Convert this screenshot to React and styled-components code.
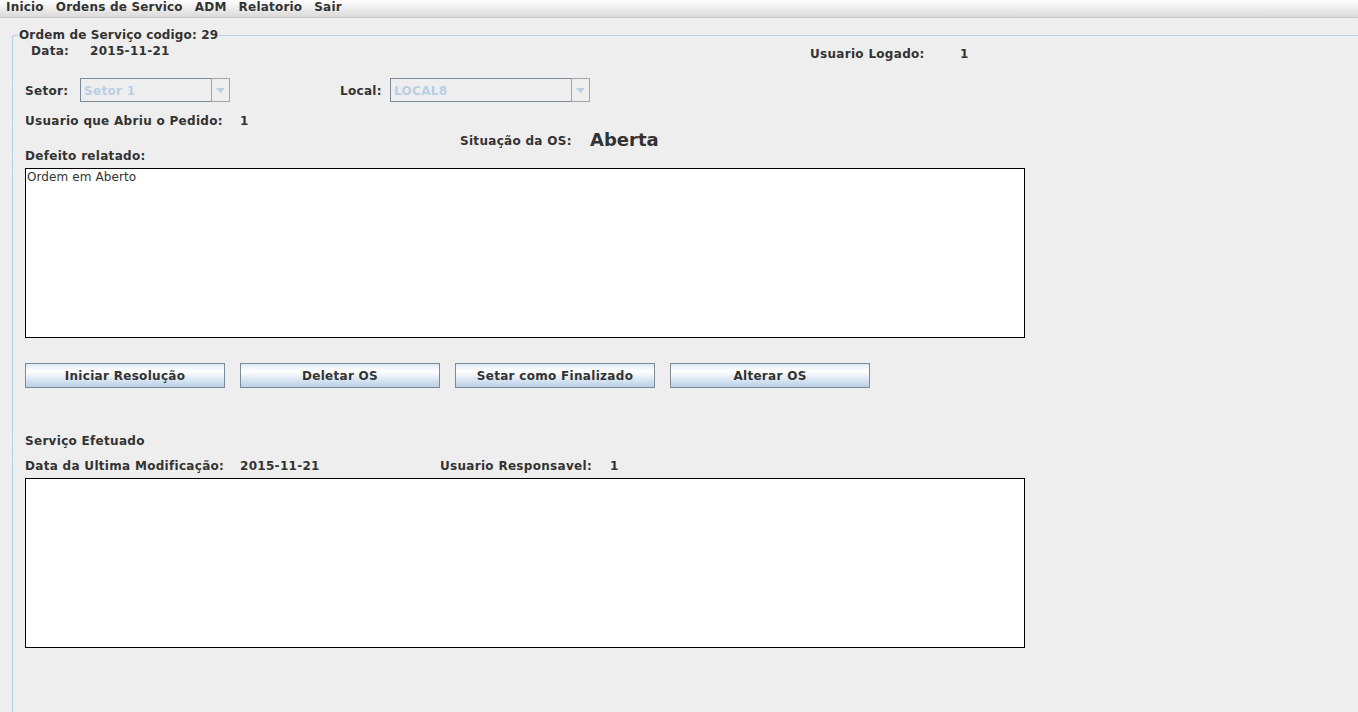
import React from 'react'
import styled, { createGlobalStyle } from 'styled-components'

const GlobalStyle = createGlobalStyle`
  html, body {
    margin: 0;
    padding: 0;
    background: #eeeeee;
    overflow: hidden;
  }
  body {
    font-family: "DejaVu Sans", "Liberation Sans", sans-serif;
    font-size: 12px;
    color: #333333;
  }
`

const Window = styled.div`
  width: 1358px;
  height: 712px;
  background: #eeeeee;
  overflow: hidden;
`

const MenuBar = styled.div`
  display: flex;
  height: 17px;
  background: linear-gradient(#ffffff, #dadada);
  border-bottom: 1px solid #c8c8c8;
`

const MenuItem = styled.div`
  padding: 0 6px;
  font-weight: bold;
  line-height: 14px;
  letter-spacing: 0.2px;
  color: #333333;
`

const Frame = styled.fieldset`
  margin: 10px 0 0 12px;
  padding: 2px 0 0 12px;
  height: 720px;
  min-width: 0;
  border: none;
  border-top: 1px solid #b8cfe5;
  border-left: 1px solid #b8cfe5;
  border-top-left-radius: 3px;
`

const Title = styled.legend`
  margin-left: -7px;
  padding: 0 1px;
  font-weight: bold;
  line-height: 14px;
  letter-spacing: 0.15px;
  color: #333333;
`

const Row = styled.div`
  display: flex;
  align-items: flex-start;
  margin-top: ${({ top }) => top || 0}px;
  padding-left: ${({ indent }) => indent || 0}px;
  height: ${({ h }) => (h ? `${h}px` : 'auto')};
`

const Label = styled.div`
  flex: none;
  width: ${({ w }) => (w ? `${w}px` : 'auto')};
  margin-left: ${({ left }) => left || 0}px;
  margin-top: ${({ top }) => top || 0}px;
  font-weight: bold;
  line-height: 14px;
  letter-spacing: 0.3px;
  white-space: nowrap;
  color: #333333;
`

const Status = styled.div`
  font-size: 18px;
  font-weight: bold;
  line-height: 19px;
  color: #333333;
`

const Combo = styled.div`
  flex: none;
  display: flex;
  width: ${({ w }) => w}px;
  height: 24px;
  box-sizing: border-box;
`

const ComboField = styled.div`
  flex: 1;
  box-sizing: border-box;
  border: 1px solid #7a8a99;
  border-right: none;
  padding: 5px 0 0 3px;
  font-weight: bold;
  line-height: 14px;
  letter-spacing: 0.3px;
  color: #b8cfe5;
  background: #eeeeee;
`

const ComboButton = styled.div`
  flex: none;
  width: 19px;
  box-sizing: border-box;
  border: 1px solid #a3a3a3;
  display: flex;
  align-items: center;
  justify-content: center;
  background: #eeeeee;
`

const TextBox = styled.div`
  width: 1000px;
  height: 170px;
  box-sizing: border-box;
  margin-top: ${({ top }) => top || 0}px;
  border: 1px solid #000000;
  background: #ffffff;
  padding: 1px 0 0 1px;
  line-height: 14px;
  letter-spacing: 0.1px;
  color: #333333;
`

const ButtonRow = styled.div`
  display: flex;
  gap: 15px;
  margin-top: 25px;
`

const Button = styled.button`
  width: 200px;
  height: 25px;
  box-sizing: border-box;
  margin: 0;
  padding: 0;
  border: 1px solid #7a8a99;
  border-radius: 0;
  background: linear-gradient(#dde8f3 0%, #ffffff 30%, #eef3f9 50%, #dde8f3 65%, #b8cfe5 100%);
  font-family: "DejaVu Sans", "Liberation Sans", sans-serif;
  font-size: 12px;
  font-weight: bold;
  letter-spacing: 0.3px;
  color: #333333;
`

const Arrow = () => (
  <svg width="9" height="5" viewBox="0 0 9 5">
    <path d="M0 0H9L4.5 5Z" fill="#b8cfe5" />
  </svg>
)

const ComboBox = ({ w, value }) => (
  <Combo w={w}>
    <ComboField>{value}</ComboField>
    <ComboButton>
      <Arrow />
    </ComboButton>
  </Combo>
)

export default function App() {
  return (
    <Window>
      <GlobalStyle />
      <MenuBar>
        <MenuItem>Inicio</MenuItem>
        <MenuItem>Ordens de Servico</MenuItem>
        <MenuItem>ADM</MenuItem>
        <MenuItem>Relatorio</MenuItem>
        <MenuItem>Sair</MenuItem>
      </MenuBar>
      <Frame>
        <Title>Ordem de Serviço codigo: 29</Title>
        <Row>
          <Label w={59} left={6}>Data:</Label>
          <Label w={720}>2015-11-21</Label>
          <Label w={150} top={3}>Usuario Logado:</Label>
          <Label top={3}>1</Label>
        </Row>
        <Row top={17}>
          <Label w={55} top={6}>Setor:</Label>
          <ComboBox w={150} value="Setor 1" />
          <Label w={50} left={110} top={6}>Local:</Label>
          <ComboBox w={200} value="LOCAL8" />
        </Row>
        <Row top={12}>
          <Label w={215}>Usuario que Abriu o Pedido:</Label>
          <Label>1</Label>
        </Row>
        <Row top={2} indent={435} h={19}>
          <Label w={130} top={4}>Situação da OS:</Label>
          <Status>Aberta</Status>
        </Row>
        <Row>
          <Label>Defeito relatado:</Label>
        </Row>
        <TextBox top={5}>Ordem em Aberto</TextBox>
        <ButtonRow>
          <Button>Iniciar Resolução</Button>
          <Button>Deletar OS</Button>
          <Button>Setar como Finalizado</Button>
          <Button>Alterar OS</Button>
        </ButtonRow>
        <Row top={46}>
          <Label>Serviço Efetuado</Label>
        </Row>
        <Row top={11}>
          <Label w={215}>Data da Ultima Modificação:</Label>
          <Label w={200}>2015-11-21</Label>
          <Label w={170}>Usuario Responsavel:</Label>
          <Label>1</Label>
        </Row>
        <TextBox top={5} />
      </Frame>
    </Window>
  )
}
